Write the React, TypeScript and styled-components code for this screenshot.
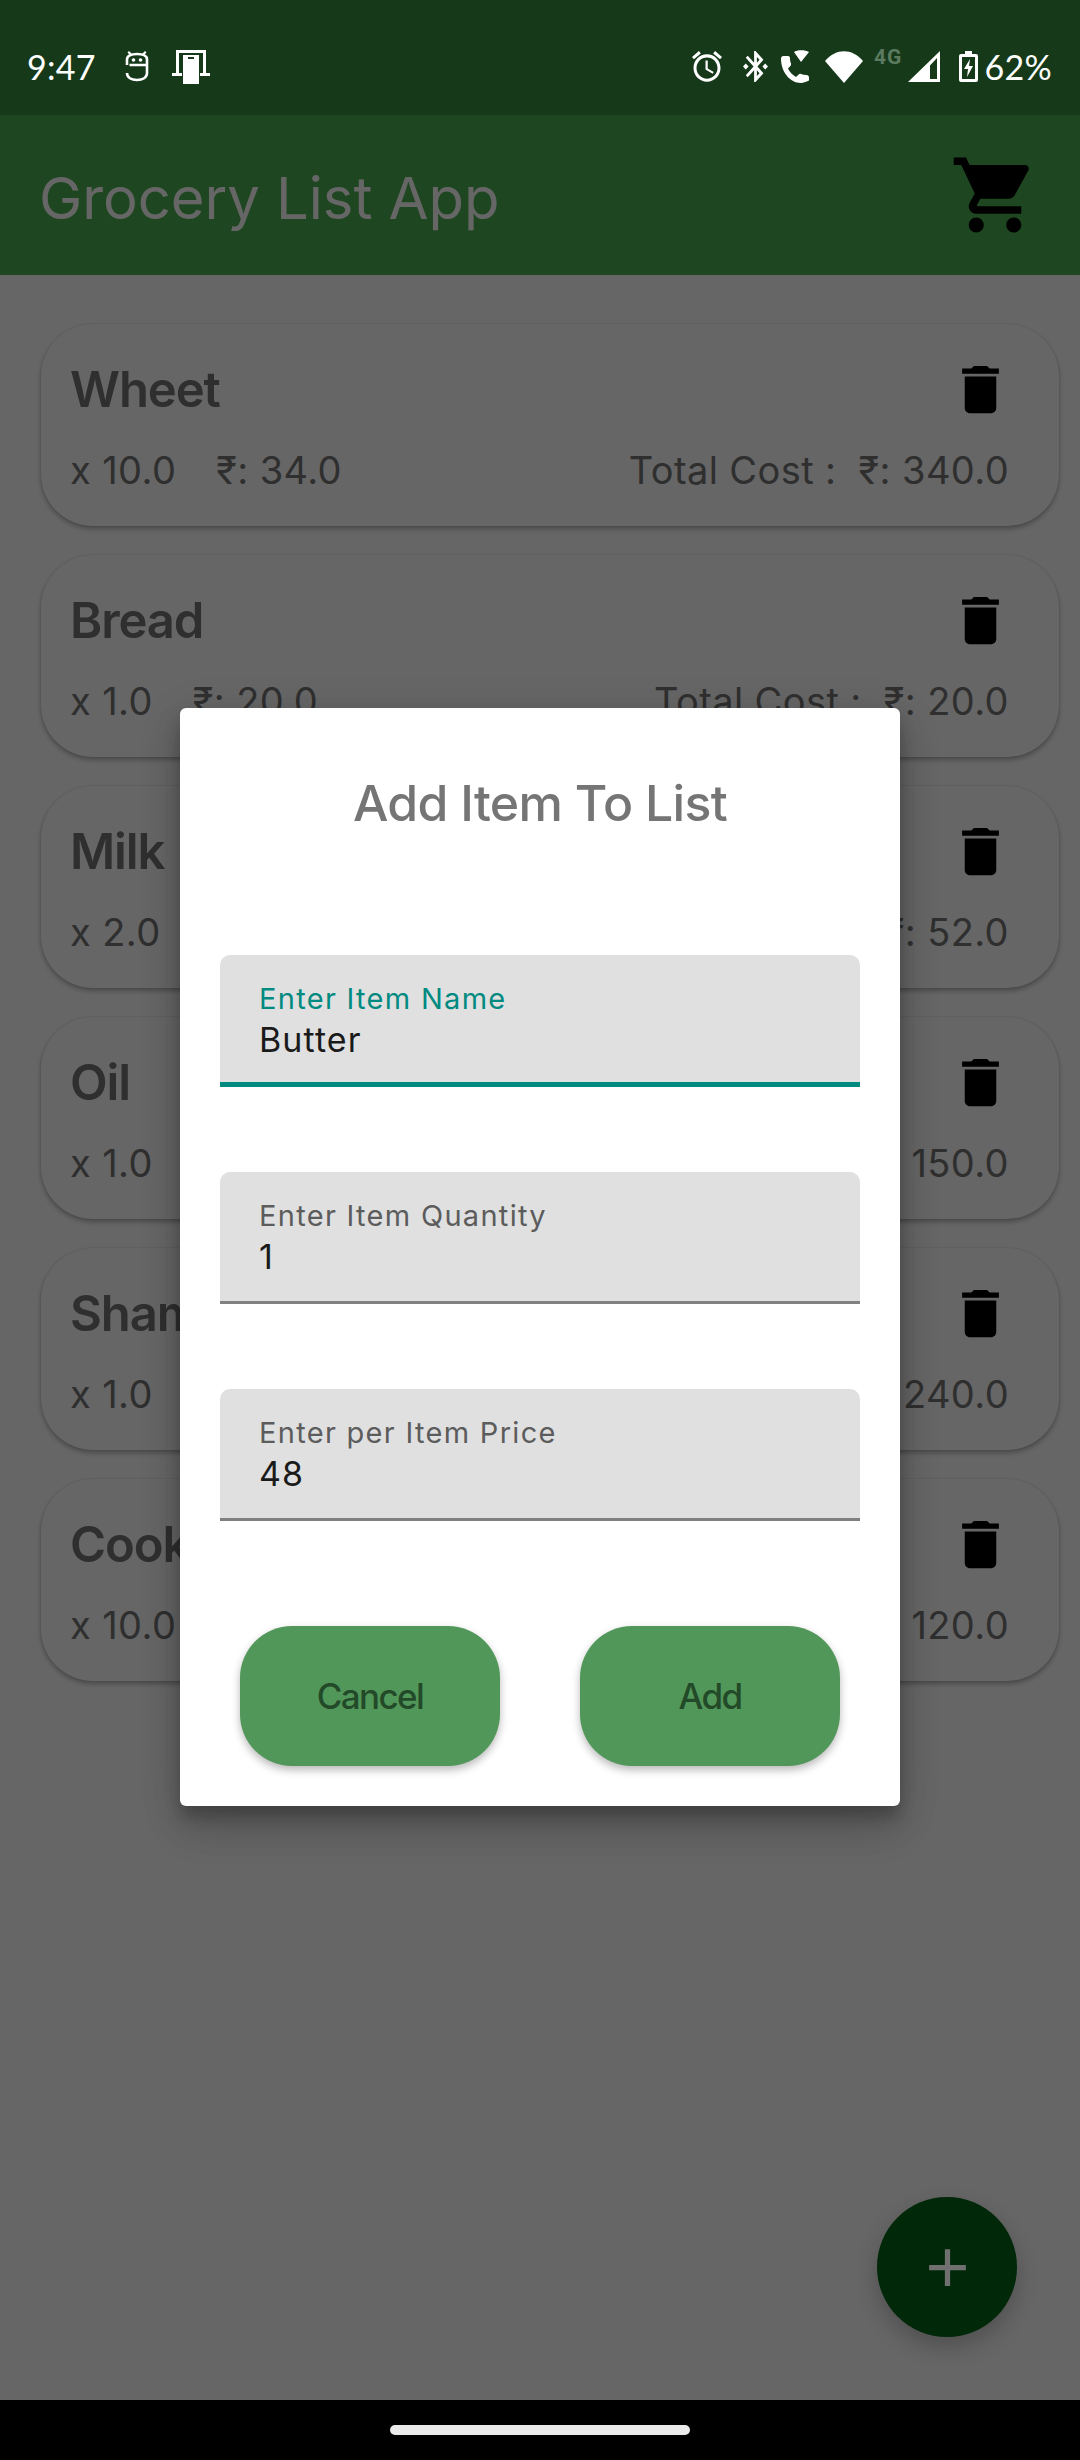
import styled, { createGlobalStyle } from "styled-components";

const GlobalStyle = createGlobalStyle`
  html, body {
    margin: 0;
    padding: 0;
    background: #fff;
  }
  * {
    box-sizing: border-box;
  }
`;

const FONT = `Inter, "Noto Sans", sans-serif`;

const items = [
  { name: "Wheet", qty: "10.0", price: "34.0", total: "340.0" },
  { name: "Bread", qty: "1.0", price: "20.0", total: "20.0" },
  { name: "Milk", qty: "2.0", price: "26.0", total: "52.0" },
  { name: "Oil", qty: "1.0", price: "150.0", total: "150.0" },
  { name: "Shampoo", qty: "1.0", price: "240.0", total: "240.0" },
  { name: "Cookies", qty: "10.0", price: "12.0", total: "120.0" },
];

const fields = [
  { label: "Enter Item Name", value: "Butter", active: true },
  { label: "Enter Item Quantity", value: "1", active: false },
  { label: "Enter per Item Price", value: "48", active: false },
];

const Screen = styled.div`
  width: 1080px;
  height: 2460px;
  display: flex;
  flex-direction: column;
  overflow: hidden;
  font-family: ${FONT};
`;

const StatusBar = styled.div`
  height: 115px;
  flex: none;
  background: #16391a;
  color: #fff;
  display: flex;
  align-items: center;
  justify-content: space-between;
  padding: 18px 28px 0 27px;
`;

const StatusGroup = styled.div`
  display: flex;
  align-items: center;
`;

const StatusText = styled.span<{ $left?: number }>`
  font-family: "Lato", ${FONT};
  font-size: 34px;
  line-height: 40px;
  letter-spacing: 0.3px;
  margin-left: ${(p) => p.$left ?? 0}px;
`;

const StatusIcon = styled.svg<{ $left?: number }>`
  display: block;
  flex: none;
  fill: #fff;
  margin-left: ${(p) => p.$left ?? 0}px;
`;

const NetworkLabel = styled.span`
  align-self: flex-start;
  margin: 1px 0 0 11.5px;
  font-family: "Roboto", ${FONT};
  font-weight: 700;
  font-size: 21px;
  line-height: 18px;
  letter-spacing: 1px;
  color: #5b7a5f;
`;

const Main = styled.div`
  flex: 1;
  position: relative;
  background: #fff;
  min-height: 0;
`;

const Toolbar = styled.header`
  height: 160px;
  background: #4caf50;
  display: flex;
  align-items: center;
  justify-content: space-between;
  padding: 0 40px 0 39px;
`;

const ToolbarTitle = styled.h1`
  margin: 6px 0 0;
  font-size: 58px;
  font-weight: 400;
  letter-spacing: -0.05px;
  color: #fff;
`;

const CartIcon = styled.svg`
  width: 90px;
  height: 90px;
  fill: #000;
  display: block;
`;

const List = styled.div`
  display: flex;
  flex-direction: column;
  gap: 29px;
  padding: 49px 21px 0 41px;
`;

const Card = styled.article`
  height: 202px;
  background: #fff;
  border-radius: 52px;
  padding: 34px 47px 0 29px;
  box-shadow: 0 3px 5px rgba(0, 0, 0, 0.28), 0 0 2px rgba(0, 0, 0, 0.14);
  color: #757575;
`;

const CardTop = styled.div`
  display: flex;
  align-items: center;
  justify-content: space-between;
  height: 63px;
`;

const ItemName = styled.h2`
  margin: 0;
  font-size: 49px;
  font-weight: 600;
  letter-spacing: -1.1px;
`;

const TrashIcon = styled.svg`
  width: 63px;
  height: 63px;
  fill: #000;
  display: block;
`;

const CardBottom = styled.div`
  display: flex;
  justify-content: space-between;
  margin-top: 25px;
  padding-right: 3px;
  font-size: 38px;
  line-height: 48px;
  letter-spacing: 0.4px;
`;

const Quantities = styled.div`
  display: flex;
  gap: 40px;
`;

const Scrim = styled.div`
  position: absolute;
  inset: 0;
  z-index: 1;
  background: rgba(0, 0, 0, 0.6);
  display: flex;
  align-items: center;
  justify-content: center;
  padding-bottom: 1px;
`;

const Dialog = styled.div`
  width: 720px;
  height: 1098px;
  background: #fff;
  border-radius: 6px;
  padding: 0 40px;
  display: flex;
  flex-direction: column;
  box-shadow: 0 24px 38px rgba(0, 0, 0, 0.14), 0 9px 46px rgba(0, 0, 0, 0.12), 0 11px 15px rgba(0, 0, 0, 0.2);
`;

const DialogTitle = styled.h2`
  margin: 63px 0 0;
  height: 184px;
  text-align: center;
  font-size: 50px;
  line-height: 64px;
  font-weight: 500;
  letter-spacing: -0.7px;
  color: #757575;
`;

const FieldStack = styled.div`
  display: flex;
  flex-direction: column;
  gap: 85px;
`;

const Field = styled.div<{ $active: boolean }>`
  height: 132px;
  background: #e0e0e0;
  border-radius: 10px 10px 0 0;
  border-bottom: ${(p) => (p.$active ? "5px solid #008a80" : "3px solid #808080")};
  padding: 26px 39px 0;
`;

const FieldLabel = styled.div<{ $active: boolean }>`
  font-size: 29px;
  line-height: 36px;
  letter-spacing: 1.3px;
  color: ${(p) => (p.$active ? "#008a80" : "#5c5c5c")};
`;

const FieldValue = styled.div`
  font-size: 34px;
  line-height: 46px;
  letter-spacing: 1.1px;
  color: #1a1a1a;
`;

const ButtonRow = styled.div`
  display: flex;
  justify-content: space-between;
  padding: 0 20px;
  margin-top: 105px;
`;

const ActionButton = styled.button`
  width: 260px;
  height: 140px;
  border: 0;
  border-radius: 52px;
  background: #52975a;
  color: #234a28;
  font-family: ${FONT};
  font-size: 35px;
  font-weight: 500;
  letter-spacing: -1.6px;
  box-shadow: 0 4px 8px rgba(0, 0, 0, 0.28);
  padding: 0;
`;

const Fab = styled.button`
  position: absolute;
  right: 63px;
  bottom: 63px;
  z-index: 2;
  width: 140px;
  height: 140px;
  border: 0;
  border-radius: 50%;
  background: #012808;
  display: flex;
  align-items: center;
  justify-content: center;
  padding: 0;
  box-shadow: 0 10px 22px rgba(0, 0, 0, 0.22);
`;

const PlusIcon = styled.svg`
  width: 63px;
  height: 63px;
  fill: #707070;
  display: block;
`;

const NavBar = styled.div`
  height: 60px;
  flex: none;
  background: #000;
  display: flex;
  align-items: center;
  justify-content: center;
`;

const HomePill = styled.div`
  width: 300px;
  height: 10px;
  border-radius: 5px;
  background: #eaeaea;
`;

const TRASH = "M6 19c0 1.1.9 2 2 2h8c1.1 0 2-.9 2-2V7H6v12zM19 4h-3.5l-1-1h-5l-1 1H5v2h14V4z";
const CART =
  "M7 18c-1.1 0-1.99.9-1.99 2S5.9 22 7 22s2-.9 2-2-.9-2-2-2zM1 2v2h2l3.6 7.59-1.35 2.45c-.16.28-.25.61-.25.96 0 1.1.9 2 2 2h12v-2H7.42c-.14 0-.25-.11-.25-.25l.03-.12.9-1.63h7.45c.75 0 1.41-.41 1.75-1.03l3.58-6.49c.08-.14.12-.31.12-.48 0-.55-.45-1-1-1H5.21l-.94-2H1zm16 16c-1.1 0-1.99.9-1.99 2s.89 2 1.99 2 2-.9 2-2-.9-2-2-2z";

const App = () => {
  return (
    <Screen>
      <GlobalStyle />
      <StatusBar>
        <StatusGroup>
          <StatusText>9:47</StatusText>
          {/* robot S notification */}
          <StatusIcon $left={29} width="24" height="31" viewBox="0 0 24 31">
            <path
              d="M2 14V8.5C2 5 6 3 12 3s10 2 10 5.5V14H4.5M22 14v8c0 4.500-4.500 7-10 7S2 26.500 2 22"
              fill="none"
              stroke="#fff"
              strokeWidth="2.6"
            />
            <path d="M4 0l3 3-1.500 1.500-3-3zM20 0l-3 3 1.500 1.500 3-3z" />
            <circle cx="8.500" cy="9" r="1.800" />
            <circle cx="15.500" cy="9" r="1.800" />
          </StatusIcon>
          {/* phone on stand notification */}
          <StatusIcon $left={23} width="38" height="34" viewBox="0 0 38 34">
            <path d="M4 0h30v23h4v3H28v-3h3V3H7v20h3v3H0v-3h4z" />
            <path d="M11 5h16v29H11zM16 7v2h6V7z" fillRule="evenodd" />
          </StatusIcon>
        </StatusGroup>
        <StatusGroup>
          <StatusIcon width="30" height="31" viewBox="2 1.800 20 20.400" preserveAspectRatio="none">
            <path d="M22 5.720l-4.600-3.860-1.290 1.530 4.600 3.860L22 5.720zM7.880 3.390L6.600 1.860 2 5.710l1.290 1.530 4.590-3.850zM12.500 8H11v6l4.750 2.850.75-1.230-4-2.370V8zM12 4c-4.970 0-9 4.030-9 9s4.030 9 9 9 9-4.030 9-9-4.030-9-9-9zm0 16c-3.870 0-7-3.130-7-7s3.130-7 7-7 7 3.130 7 7-3.130 7-7 7z" />
          </StatusIcon>
          <StatusIcon $left={21} width="25" height="31" viewBox="3 2 18 20" preserveAspectRatio="none">
            <path d="M7 12l-2-2-2 2 2 2 2-2zm10.710-4.290L12 2h-1v7.590L6.410 5 5 6.410 10.590 12 5 17.590 6.410 19 11 14.410V22h1l5.710-5.710-4.300-4.290 4.300-4.290zM13 5.830l1.880 1.880L13 9.590V5.830zm1.880 10.460L13 18.170v-3.760l1.880 1.880zM19 10l-2 2 2 2 2-2-2-2z" />
          </StatusIcon>
          <StatusIcon $left={12.5} width="29" height="35" viewBox="0 0 29 35">
            <path d="M13 3C16 0.500 24 0.500 28 3L20 13z" />
            <path d="M28 31.500c-3 1.500-6 2.500-8 2.500C9 34 0 23 0 9.500 0 8 1 7 2.500 7H7c1 0 2 .8 2 2 0 2 .3 4 1 5.500.3 1 0 1.800-.6 2.400L7 19.500c2 3.800 4.500 6.500 8 8.500l2.600-2.500c.7-.7 1.500-.8 2.400-.5 1.600.6 3.500 1 5.500 1 1.500 0 2.500 1 2.500 2.500z" />
          </StatusIcon>
          <StatusIcon $left={15} width="38" height="32" viewBox="0 0 38 32">
            <path d="M0 10C11-3 27-3 38 10L19 32Z" />
          </StatusIcon>
          <NetworkLabel>4G</NetworkLabel>
          <StatusIcon $left={6} width="32" height="31" viewBox="0 0 32 31">
            <path d="M32 0V31H0ZM22 28h7V7l-7 7.500z" fillRule="evenodd" />
          </StatusIcon>
          <StatusIcon $left={19} width="19" height="31" viewBox="0 0 19 31">
            <path
              d="M6 0h7v3h4a2 2 0 0 1 2 2v24a2 2 0 0 1-2 2H2a2 2 0 0 1-2-2V5a2 2 0 0 1 2-2h4zM3 6v22h13V6z"
              fillRule="evenodd"
            />
            <path d="M11 8 5 18h4l-1 8 6-11h-4z" />
          </StatusIcon>
          <StatusText $left={6}>62%</StatusText>
        </StatusGroup>
      </StatusBar>

      <Main>
        <Toolbar>
          <ToolbarTitle>Grocery List App</ToolbarTitle>
          <CartIcon viewBox="0 0 24 24">
            <path d={CART} />
          </CartIcon>
        </Toolbar>

        <List>
          {items.map((item) => (
            <Card key={item.name}>
              <CardTop>
                <ItemName>{item.name}</ItemName>
                <TrashIcon viewBox="0 0 24 24">
                  <path d={TRASH} />
                </TrashIcon>
              </CardTop>
              <CardBottom>
                <Quantities>
                  <span>x {item.qty}</span>
                  <span>₹: {item.price}</span>
                </Quantities>
                <span>Total Cost :&nbsp; ₹: {item.total}</span>
              </CardBottom>
            </Card>
          ))}
        </List>

        <Fab aria-label="Add item">
          <PlusIcon viewBox="0 0 24 24">
            <path d="M19 13h-6v6h-2v-6H5v-2h6V5h2v6h6v2z" />
          </PlusIcon>
        </Fab>

        <Scrim>
          <Dialog>
            <DialogTitle>Add Item To List</DialogTitle>
            <FieldStack>
              {fields.map((field) => (
                <Field key={field.label} $active={field.active}>
                  <FieldLabel $active={field.active}>{field.label}</FieldLabel>
                  <FieldValue>{field.value}</FieldValue>
                </Field>
              ))}
            </FieldStack>
            <ButtonRow>
              <ActionButton>Cancel</ActionButton>
              <ActionButton>Add</ActionButton>
            </ButtonRow>
          </Dialog>
        </Scrim>
      </Main>

      <NavBar>
        <HomePill />
      </NavBar>
    </Screen>
  );
};

export default App;
